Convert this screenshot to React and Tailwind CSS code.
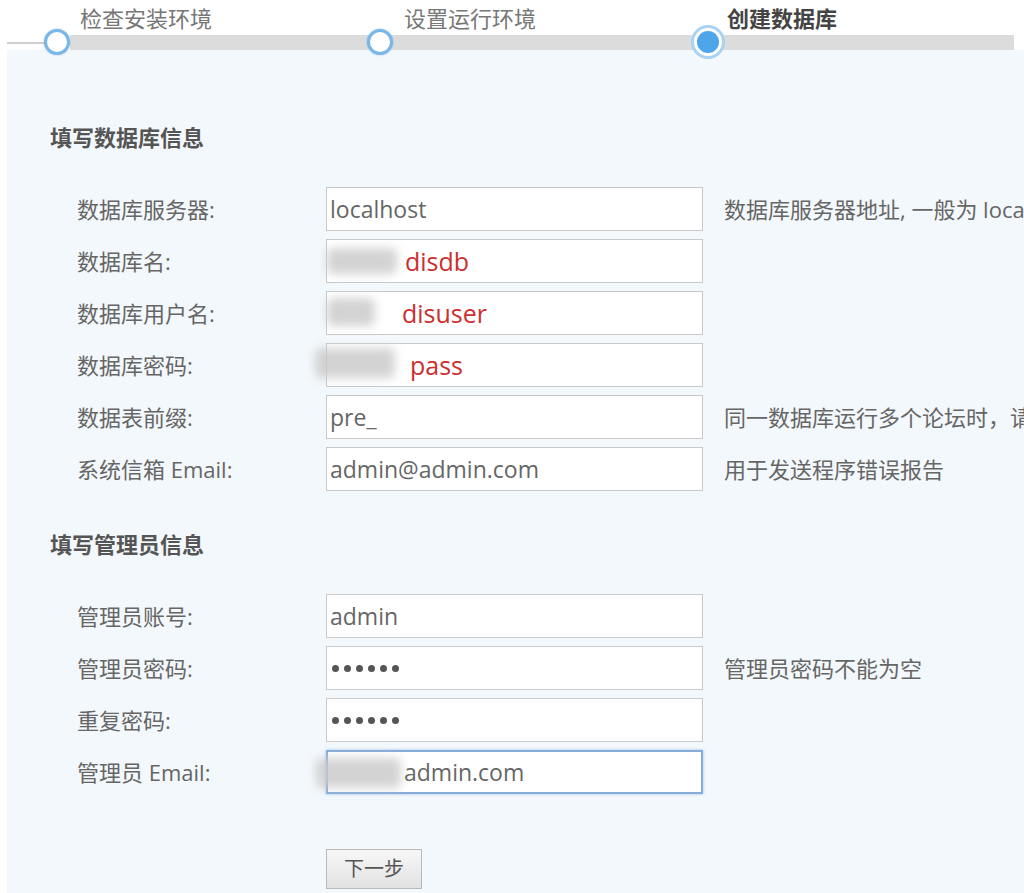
import React from "react";

const font = { fontFamily: '"Open Sans", "Noto Sans CJK SC", sans-serif' };

function Blur({ className }) {
  return (
    <div className={"pointer-events-none absolute " + className}>
      <div className="h-full w-full rounded-[6px] bg-[#c9c9c9] opacity-80 blur-[5px]" />
    </div>
  );
}

function Dots() {
  return (
    <div className="flex items-center gap-[5px] pl-[5px]">
      {[0, 1, 2, 3, 4, 5].map((i) => (
        <span key={i} className="block h-[7px] w-[7px] rounded-full bg-[#555]" />
      ))}
    </div>
  );
}

function Row({ label, children, hint, focused }) {
  return (
    <div className="flex h-[44px] items-center">
      <div className="w-[249px] shrink-0 text-[22px] text-[#666]">{label}</div>
      <div
        className={
          "relative flex h-[44px] w-[377px] shrink-0 items-center bg-white " +
          (focused
            ? "border-[2px] border-[#86acd9] shadow-[0_0_3px_rgba(120,160,220,0.6)]"
            : "border border-[#c9c9c9]")
        }
      >
        {children}
      </div>
      {hint && (
        <div className="ml-[21px] whitespace-nowrap text-[22px] text-[#666]">{hint}</div>
      )}
    </div>
  );
}

function Val({ children, className = "" }) {
  return <span className={"pl-[3px] text-[23px] text-[#666] " + className}>{children}</span>;
}

function Red({ children, left }) {
  return (
    <span className={"text-[25px] leading-none text-[#cc2f2f] " + left}>{children}</span>
  );
}

export default function App() {
  return (
    <div className="h-[893px] w-[1024px] overflow-hidden bg-white" style={font}>
      {/* Steps header */}
      <div className="flex h-[35px] items-center pt-[1px] text-[22px] text-[#777]">
        <div className="w-[80px] shrink-0" />
        <div className="w-[324px] shrink-0">检查安装环境</div>
        <div className="w-[323px] shrink-0">设置运行环境</div>
        <div className="shrink-0 font-bold text-[#444]">创建数据库</div>
      </div>
      <div className="relative flex h-[15px] items-start">
        <div className="ml-[7px] mt-[7px] h-[2px] w-[63px] bg-[#cfcfcf]" />
        <div className="h-[15px] w-[944px] bg-[#dcdcdc]" />
        <div className="absolute left-[44px] top-[-6px] h-[26px] w-[26px] rounded-full border-[3px] border-[#7ab6e6] bg-white shadow-[0_0_2px_rgba(120,180,230,0.8)]" />
        <div className="absolute left-[367px] top-[-6px] h-[26px] w-[26px] rounded-full border-[3px] border-[#7ab6e6] bg-white shadow-[0_0_2px_rgba(120,180,230,0.8)]" />
        <div className="absolute left-[691px] top-[-10px] flex h-[34px] w-[34px] items-center justify-center rounded-full border-[3px] border-[#a9d2f2] bg-white">
          <div className="h-[22px] w-[22px] rounded-full bg-[#4ea5ea]" />
        </div>
      </div>

      {/* Body */}
      <div className="ml-[7px] h-[843px] w-[1017px] overflow-hidden bg-[#f3f8fc] pl-[43px] pt-[72px]">
        <div className="text-[22px] font-bold leading-[30px] text-[#555]">填写数据库信息</div>

        <div className="mt-[35px] flex flex-col gap-[8px] pl-[27px]">
          <Row label="数据库服务器:" hint="数据库服务器地址, 一般为 localhost">
            <Val>localhost</Val>
          </Row>
          <Row label="数据库名:">
            <Blur className="left-[0px] top-[8px] h-[26px] w-[70px]" />
            <Red left="ml-[78px]">disdb</Red>
          </Row>
          <Row label="数据库用户名:">
            <Blur className="left-[0px] top-[6px] h-[28px] w-[48px]" />
            <Red left="ml-[75px]">disuser</Red>
          </Row>
          <Row label="数据库密码:">
            <Blur className="left-[-12px] top-[4px] h-[30px] w-[80px]" />
            <Red left="ml-[83px]">pass</Red>
          </Row>
          <Row label="数据表前缀:" hint="同一数据库运行多个论坛时，请修改前缀">
            <Val>pre_</Val>
          </Row>
          <Row label="系统信箱 Email:" hint="用于发送程序错误报告">
            <Val>admin@admin.com</Val>
          </Row>
        </div>

        <div className="mt-[38px] text-[22px] font-bold leading-[30px] text-[#555]">填写管理员信息</div>

        <div className="mt-[35px] flex flex-col gap-[8px] pl-[27px]">
          <Row label="管理员账号:">
            <Val>admin</Val>
          </Row>
          <Row label="管理员密码:" hint="管理员密码不能为空">
            <Dots />
          </Row>
          <Row label="重复密码:">
            <Dots />
          </Row>
          <Row label="管理员 Email:" focused>
            <Blur className="left-[-12px] top-[6px] h-[30px] w-[85px]" />
            <Val className="ml-[73px] pl-0">admin.com</Val>
          </Row>
        </div>

        <div className="mt-[55px] pl-[276px]">
          <button className="flex h-[40px] w-[96px] items-center justify-center border border-[#b9b9b9] bg-gradient-to-b from-[#f7f7f7] to-[#e2e2e2] text-[20px] text-[#555]">
            下一步
          </button>
        </div>
      </div>
    </div>
  );
}
